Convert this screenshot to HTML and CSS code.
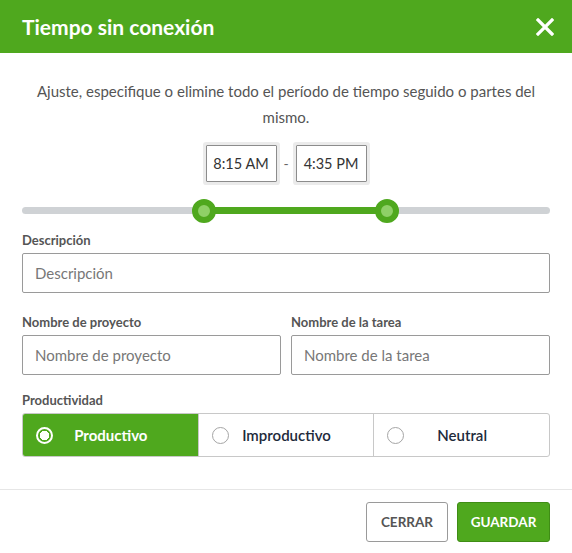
FILE: index.html
```html
<!DOCTYPE html>
<html lang="es">
<head>
<meta charset="utf-8">
<title>Tiempo sin conexión</title>
<link rel="stylesheet" href="styles.css">
</head>
<body>
<div class="modal">
  <header class="modal-header">
    <h1 class="title">Tiempo sin conexión</h1>
    <button class="close" aria-label="Cerrar">
      <svg width="18" height="18" viewBox="0 0 18 18"><path d="M2 2 L16 16 M16 2 L2 16" stroke="#fff" stroke-width="3.2" stroke-linecap="square"/></svg>
    </button>
  </header>
  <main class="modal-body">
    <p class="intro">Ajuste, especifique o elimine todo el período de tiempo seguido o partes del mismo.</p>
    <div class="times">
      <span class="time">8:15 AM</span>
      <span class="dash">-</span>
      <span class="time">4:35 PM</span>
    </div>
    <div class="slider">
      <div class="track"></div>
      <div class="fill" style="left:34.47%;width:34.66%"></div>
      <span class="handle" style="left:34.47%"></span>
      <span class="handle" style="left:69.13%"></span>
    </div>
    <label class="label first">Descripción</label>
    <div class="input">Descripción</div>
    <div class="row">
      <div class="col">
        <label class="label">Nombre de proyecto</label>
        <div class="input">Nombre de proyecto</div>
      </div>
      <div class="col">
        <label class="label">Nombre de la tarea</label>
        <div class="input">Nombre de la tarea</div>
      </div>
    </div>
    <label class="label">Productividad</label>
    <div class="segments">
      <div class="seg active"><span class="radio"></span><span class="seg-text">Productivo</span></div>
      <div class="seg"><span class="radio"></span><span class="seg-text">Improductivo</span></div>
      <div class="seg"><span class="radio"></span><span class="seg-text">Neutral</span></div>
    </div>
  </main>
  <footer class="modal-footer">
    <button class="btn btn-close">CERRAR</button>
    <button class="btn btn-save">GUARDAR</button>
  </footer>
</div>
</body>
</html>
```
FILE: styles.css
```css
* { box-sizing: border-box; }
html, body { margin: 0; padding: 0; background: #fff; }
body { font-family: "Source Sans Pro", Lato, "Liberation Sans", sans-serif; color: #555; }
.modal { width: 572px; height: 553px; background: #fff; }
.modal-header {
  height: 53px; background: #4fa81e; display: flex; align-items: center;
  justify-content: space-between; padding: 0 18px 0 22px;
}
.title { margin: 0; font-size: 21px; font-weight: 700; color: #fff; letter-spacing: 0; }
.close { background: none; border: 0; padding: 0; width: 18px; height: 18px; display: flex; cursor: pointer; }
.modal-body { padding: 0 22px; }
.intro { margin: 25px 0 0; text-align: center; font-size: 15px; line-height: 26px; color: #555; padding: 0 8px; }
.times { display: flex; justify-content: center; align-items: center; margin-top: 15px; }
.time {
  width: 71px; height: 37px; border: 1px solid #8c8c8c; border-radius: 1px;
  box-shadow: 0 0 0 3px #ebebeb; display: flex; align-items: center; justify-content: center;
  font-size: 14.5px; color: #333;
}
.dash { width: 19px; text-align: center; font-size: 14px; color: #666; }
.slider { position: relative; height: 24px; margin-top: 17px; }
.track { position: absolute; left: 0; right: 0; top: 8px; height: 7px; border-radius: 4px; background: #cfd2d5; }
.fill { position: absolute; top: 8px; height: 7px; background: #4fa81e; }
.handle {
  position: absolute; top: 0; width: 24px; height: 24px; margin-left: -12px; border-radius: 50%;
  background: #8fd067; border: 6px solid #4fa81e;
}
.label { display: block; font-size: 13px; font-weight: 700; color: #555; line-height: 18px; margin-top: 14px; margin-bottom: 4px; }
.label.first { margin-top: 8px; }
.input {
  height: 40px; border: 1px solid #9a9a9a; border-radius: 2px; padding: 0 12px;
  display: flex; align-items: center; font-size: 15px; color: #777;
}
.row { display: flex; gap: 10px; margin-top: 6px; }
.col { flex: 1; }
.row + .label { margin-top: 16px; }
.segments { display: flex; height: 44px; border: 1px solid #c8c8c8; border-radius: 3px; overflow: hidden; }
.seg { flex: 1; display: flex; align-items: center; padding: 0 13px; font-size: 15px; color: #1e2a3b; font-weight: 600; }
.seg + .seg { border-left: 1px solid #c8c8c8; }
.seg.active { background: #4fa81e; color: #fff; font-weight: 700; }
.radio { width: 17px; height: 17px; border-radius: 50%; border: 1px solid #a5a5a5; background: #fff; flex: none; }
.seg.active .radio { border: 2px solid #fff; background: radial-gradient(circle, #fff 0 4.5px, #4fa81e 5px); }
.seg-text { flex: 1; text-align: center; margin-right: 16px; }
.modal-footer {
  margin-top: 32px; border-top: 1px solid #e6e6e6; display: flex; justify-content: flex-end;
  gap: 9px; padding: 12px 22px 0;
}
.btn { height: 40px; border-radius: 3px; font-family: inherit; font-size: 13.5px; font-weight: 700; padding: 0; cursor: pointer; }
.btn-close { width: 82px; background: #fff; border: 1px solid #9a9a9a; color: #555; }
.btn-save { width: 93px; background: #4fa81e; border: 1px solid #3f8d15; color: #fff; }
```
